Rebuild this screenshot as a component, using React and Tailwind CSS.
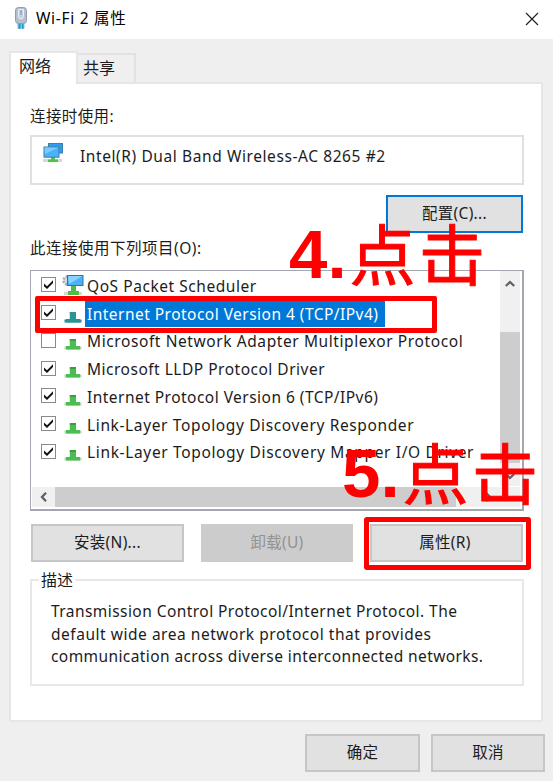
import React from "react";

const font = "font-['Noto_Sans','Noto_Sans_CJK_SC',sans-serif]";
const cjk = "font-['Noto_Sans_CJK_SC',sans-serif]";

function AdapterIcon() {
  return (
    <svg width="14" height="24" viewBox="0 0 14 24" className="shrink-0">
      <rect x="3.5" y="16" width="7" height="6.500" fill="#79c4e3" />
      <rect x="4.5" y="18" width="2" height="5" fill="#2e9ac4" />
      <rect x="8" y="18" width="1.5" height="5" fill="#2e9ac4" />
      <rect x="1.5" y="1.5" width="11" height="16" rx="3" fill="#b4bfd0" stroke="#8e9bb0" />
      <path d="M4.500 3.500h5v7a2.500 2.500 0 0 1-5 0z" fill="#c6d0de" stroke="#e9eef5" />
      <path d="M7 4v5" stroke="#8090aa" />
    </svg>
  );
}

function ComputersIcon() {
  return (
    <svg width="22" height="22" viewBox="0 0 22 22" className="shrink-0">
      <rect x="1" y="17" width="19" height="3" fill="#d5d8d5" />
      <rect x="6.500" y="1.500" width="14" height="9.500" fill="#2d9df0" stroke="#3f7fb0" />
      <path d="M9 15h4v2.500h3V20H6v-2.500h3z" fill="#4fc24d" />
      <rect x="2" y="5" width="15" height="10.200" fill="#49b2fb" stroke="#417fa8" />
      <path d="M2.500 5.500h14L3 12z" fill="#7accff" />
    </svg>
  );
}

function SchedulerIcon() {
  return (
    <svg width="22" height="22" viewBox="0 0 22 22" className="-mt-px shrink-0">
      <circle cx="5.500" cy="6.500" r="4" fill="#d7dce0" stroke="#a3abb1" strokeWidth="2.400" strokeDasharray="2 1.300" />
      <rect x="2" y="18" width="18" height="3" fill="#d5d8d5" />
      <path d="M9 12h5v5h3v4H6v-4h3z" fill="#4cbd4a" />
      <rect x="5.500" y="1.500" width="15.500" height="10" fill="#49b2fb" stroke="#41708f" />
      <path d="M6 2h14.500L7 10z" fill="#8ad2ff" />
    </svg>
  );
}

function ProtocolIcon({ selected }) {
  return (
    <svg width="18" height="12" viewBox="0 0 18 12" className="mt-[6px] shrink-0">
      <rect x="0.500" y="8.500" width="17" height="3" fill={selected ? "#3c7fb0" : "#b4d6b4"} />
      <path d="M5.800 1h6.200v7h4v3.500H2V8h3.800z" fill={selected ? "#259690" : "#4cbd50"} />
      <path d="M5.800 1h6.200v2H5.800z" fill={selected ? "#3a8aa0" : "#38a03c"} />
    </svg>
  );
}

function Checkbox({ checked }) {
  return (
    <span className="-mt-[2px] flex h-[15px] w-[15px] shrink-0 items-center justify-center border border-[#8a8a8a] bg-white">
      {checked && (
        <svg width="11" height="11" viewBox="0 0 11 11">
          <path d="M1 4.500 4 7.300 10 1.300V4L4 10 1 7.300z" fill="#111" />
        </svg>
      )}
    </span>
  );
}

function Chevron({ className }) {
  return (
    <svg width="12" height="12" viewBox="0 0 12 12" className={className}>
      <path d="M1.800 8 6 4l4.200 4" fill="none" stroke="#606060" strokeWidth="2.300" />
    </svg>
  );
}

function Button({ className, children }) {
  return (
    <button className={`flex items-center justify-center pb-[2px] tracking-[0.300px] ${className}`}>{children}</button>
  );
}

const plain = "border-2 border-[#c6c6c6] bg-[#e1e1e1]";

const items = [
  { label: "QoS Packet Scheduler", checked: true, icon: "qos", tracking: "tracking-[0.550px]" },
  { label: "Internet Protocol Version 4 (TCP/IPv4)", checked: true, selected: true, tracking: "tracking-[0.470px]" },
  { label: "Microsoft Network Adapter Multiplexor Protocol", checked: false, tracking: "tracking-[0.590px]" },
  { label: "Microsoft LLDP Protocol Driver", checked: true, tracking: "tracking-[0.500px]" },
  { label: "Internet Protocol Version 6 (TCP/IPv6)", checked: true, tracking: "tracking-[0.470px]" },
  { label: "Link-Layer Topology Discovery Responder", checked: true, tracking: "tracking-[0.630px]" },
  { label: "Link-Layer Topology Discovery Mapper I/O Driver", checked: true, tracking: "tracking-[0.650px]" },
];

function Row({ item }) {
  return (
    <li className="flex h-[27.750px] items-center pl-[9px]">
      <Checkbox checked={item.checked} />
      <span className="ml-[6px] flex w-[22px] justify-center">
        {item.icon === "qos" ? <SchedulerIcon /> : <ProtocolIcon selected={item.selected} />}
      </span>
      <span
        className={`ml-px flex h-[27px] items-center whitespace-nowrap pl-[2px] ${item.tracking} ${
          item.selected ? "bg-[#0078d7] pr-[7px] text-white" : ""
        }`}
      >
        {item.label}
      </span>
    </li>
  );
}

function StepLabel({ number, className }) {
  return (
    <div className={`absolute z-30 flex items-start whitespace-nowrap leading-[72px] text-[#ff0000] ${className}`}>
      <span className="font-['Liberation_Sans',sans-serif] text-[69px] font-bold">{number}.</span>
      <span className={`-mt-[4px] ml-[3px] text-[66px] tracking-[3.500px] [-webkit-text-stroke:1px_#ff0000] ${cjk}`}>点击</span>
    </div>
  );
}

export default function App() {
  return (
    <div className={`relative flex h-[781px] w-[553px] flex-col overflow-hidden bg-[#efefef] text-[15.500px] leading-[22px] text-[#1c1c1c] ${font}`}>
      <header className="flex h-[39px] shrink-0 items-center bg-white pl-[14px] pr-[14px] pb-[3px]">
        <AdapterIcon />
        <h1 className="ml-[8px] flex-1 tracking-[0.700px] text-black">Wi-Fi 2 属性</h1>
        <svg width="14" height="14" viewBox="0 0 14 14" className="mt-[2px]">
          <path d="M1 1l12 12M13 1L1 13" stroke="#222" strokeWidth="1.200" />
        </svg>
      </header>

      <nav className="flex h-[44px] shrink-0 items-end pl-[9px]">
        <div className="z-10 -mb-px flex h-[33px] w-[69px] border-2 border-b-0 border-[#e6e6e6] bg-white pl-[8px] pt-[2px] text-[16px]">网络</div>
        <div className="flex h-[30px] w-[58px] border-2 border-l-0 border-b-0 border-[#e2e2e2] bg-[#efefef] pl-[5px] pt-[2px] text-[16px]">共享</div>
      </nav>

      <main className="-mt-px ml-[9px] flex h-[640px] w-[534px] shrink-0 flex-col border-2 border-[#e6e6e6] bg-white pl-[19px]">
        <p className="mt-[21px] h-[22px] tracking-[0.400px]">连接时使用:</p>
        <div className="mt-[8px] flex h-[50px] w-[494px] shrink-0 border-2 border-[#e0e0e0] pl-[10px] pt-[5px]">
          <ComputersIcon />
          <span className="ml-[16px] mt-[3px] whitespace-nowrap tracking-[0.590px]">Intel(R) Dual Band Wireless-AC 8265 #2</span>
        </div>
        <Button className="ml-[356px] mt-[10px] h-[38px] w-[137px] shrink-0 border-2 border-[#0078d7] bg-[#e1e1e1]">配置(C)...</Button>
        <p className="mt-[4px] h-[22px] tracking-[0.500px]">此连接使用下列项目(O):</p>

        <section className="mt-[11px] flex h-[241px] w-[494px] shrink-0 flex-col border border-b-2 border-r-2 border-[#a4a6b0] pl-px">
          <div className="flex h-[215px] shrink-0">
            <ul className="w-[468px] overflow-hidden pt-[1px]">
              {items.map((item) => (
                <Row key={item.label} item={item} />
              ))}
            </ul>
            <div className="flex w-[20px] flex-col items-center bg-[#f0f0f0]">
              <Chevron className="mt-[7px]" />
              <div className="mt-[42px] h-[131px] w-[20px] shrink-0 bg-[#cdcdcd]" />
              <Chevron className="mt-[7px] shrink-0 rotate-180" />
            </div>
          </div>
          <div className="mt-px flex h-[20px] w-[488px] items-center bg-[#f0f0f0]">
            <Chevron className="ml-[6px] -rotate-90" />
            <div className="ml-[5px] h-[20px] w-[401px] bg-[#cdcdcd]" />
            <Chevron className="ml-[26px] rotate-90" />
          </div>
        </section>

        <div className="ml-px mt-[13px] flex w-[492px] shrink-0 justify-between">
          <Button className={`h-[38px] w-[153px] ${plain}`}>安装(N)...</Button>
          <Button className="h-[38px] w-[152px] bg-[#cccccc] text-[#929292]">卸载(U)</Button>
          <Button className={`h-[38px] w-[153px] pr-[3px] ${plain}`}>属性(R)</Button>
        </div>

        <fieldset className="mt-[7px] h-[117px] w-[494px] shrink-0 border-2 border-[#e8e8e8] pl-[19px]">
          <legend className="-ml-[12px] px-[2px] text-[16px]">描述</legend>
          <p className="mt-[9px] whitespace-nowrap leading-[22.500px]">
            <span className="tracking-[0.440px]">Transmission Control Protocol/Internet Protocol. The</span>
            <br />
            <span className="tracking-[0.530px]">default wide area network protocol that provides</span>
            <br />
            <span className="tracking-[0.410px]">communication across diverse interconnected networks.</span>
          </p>
        </fieldset>
      </main>

      <footer className="mt-[12px] flex justify-end gap-[11px] pr-[8px]">
        <Button className={`h-[38px] w-[115px] ${plain}`}>确定</Button>
        <Button className={`h-[38px] w-[114px] ${plain}`}>取消</Button>
      </footer>

      <div className="absolute left-[35px] top-[296px] z-20 h-[37px] w-[402px] rounded-[2px] border-[5px] border-[#ff0000]" />
      <div className="absolute left-[364px] top-[517px] z-20 h-[53px] w-[167px] rounded-[3px] border-[5px] border-[#ff0000]" />
      <StepLabel number={4} className="left-[289px] top-[219px]" />
      <StepLabel number={5} className="left-[342px] top-[438px]" />
    </div>
  );
}
